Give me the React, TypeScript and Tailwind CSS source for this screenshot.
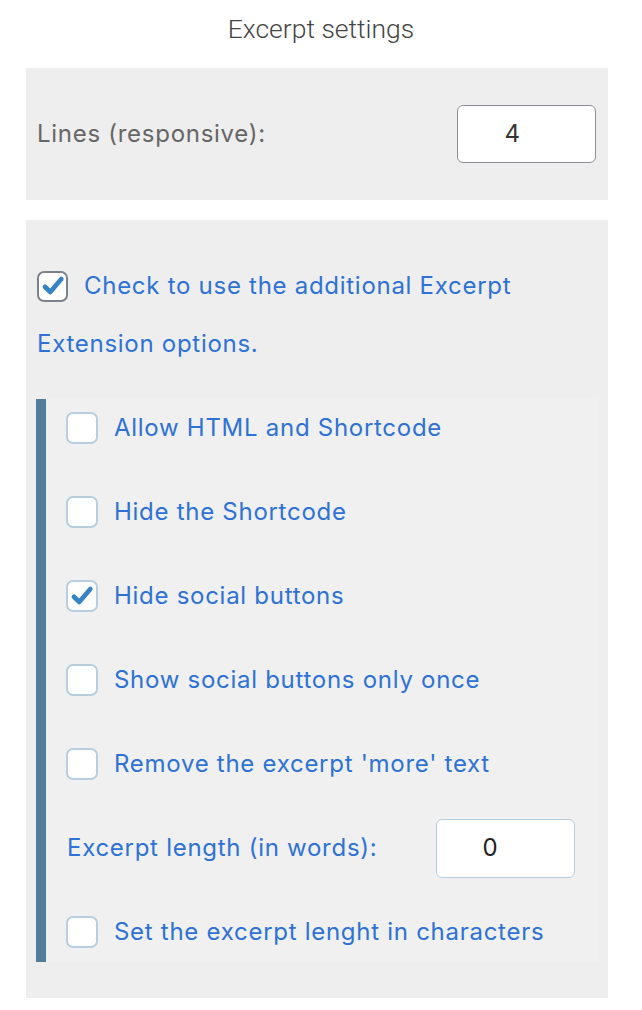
import React from "react";

type Option = { label: string; checked?: boolean };

const options: Option[] = [
    { label: "Allow HTML and Shortcode" },
    { label: "Hide the Shortcode" },
    { label: "Hide social buttons", checked: true },
    { label: "Show social buttons only once" },
    { label: "Remove the excerpt 'more' text" },
];

function Box({ checked, dark }: { checked?: boolean; dark?: boolean }) {
    return (
        <span
            className={
                dark
                    ? "inline-flex h-[31px] w-[31px] shrink-0 items-center justify-center rounded-[7px] border-2 border-[#7c828a] bg-white align-middle"
                    : "inline-flex h-[32px] w-[32px] shrink-0 items-center justify-center rounded-[7px] border-2 border-[#b7cee1] bg-white align-middle"
            }
        >
            {checked && (
                <svg viewBox="0 0 20 20" className="h-[26px] w-[26px]">
                    <path
                        d="M3.8 10.6 L7.9 14.6 L16.4 4.6"
                        fill="none"
                        stroke="#3582c4"
                        strokeWidth="3.6"
                        strokeLinecap="round"
                        strokeLinejoin="round"
                    />
                </svg>
            )}
        </span>
    );
}

export default function App() {
    return (
        <div className="min-h-[1010px] w-[642px] bg-white font-['Inter','Noto_Sans',sans-serif] tracking-[0.045em]">
            <h1 className="pt-[13px] text-center font-['Roboto',sans-serif] text-[26.5px] font-light leading-[32px] tracking-normal text-[#444]">
                Excerpt settings
            </h1>

            <div className="ml-[26px] mr-[34px] mt-[23px] flex h-[132px] items-center justify-between bg-[#eeeeee] pl-[11px] pr-[12px]">
                <span className="text-[24px] text-[#666]">Lines (responsive):</span>
                <div className="flex h-[58px] w-[139px] items-center justify-center rounded-[6px] border-[1.5px] border-[#8c9096] bg-white pr-[28px] text-[24px] text-[#333]">
                    4
                </div>
            </div>

            <div className="ml-[26px] mr-[34px] mt-[20px] bg-[#eeeeee] px-[10px] pb-[36px] pt-[36px]">
                <p className="pl-[1px] text-[24px] leading-[58px] text-[#2d72d4]">
                    <Box checked dark />
                    <span className="ml-[16px] align-middle">Check to use the additional Excerpt</span>
                    <br />
                    Extension options.
                </p>

                <div className="mt-[26px] flex flex-col gap-[26px] border-l-[10px] border-[#527d9b] bg-[#f0f0f0] pb-[1px] pl-[20px] pr-[23px]">
                    {options.map((o) => (
                        <label key={o.label} className="flex h-[58px] items-center gap-[16px] text-[24px] text-[#2d72d4]">
                            <Box checked={o.checked} />
                            {o.label}
                        </label>
                    ))}
                    <div className="flex h-[58px] items-center justify-between text-[24px] text-[#2d72d4]">
                        <span className="pl-[1px]">Excerpt length (in words):</span>
                        <div className="flex h-[59px] w-[139px] items-center justify-center rounded-[6px] border-[1.5px] border-[#b7cee1] bg-white pr-[30px] text-[24px] text-[#222]">
                            0
                        </div>
                    </div>
                    <label className="flex h-[58px] items-center gap-[16px] text-[24px] text-[#2d72d4]">
                        <Box />
                        Set the excerpt lenght in characters
                    </label>
                </div>
            </div>
        </div>
    );
}
